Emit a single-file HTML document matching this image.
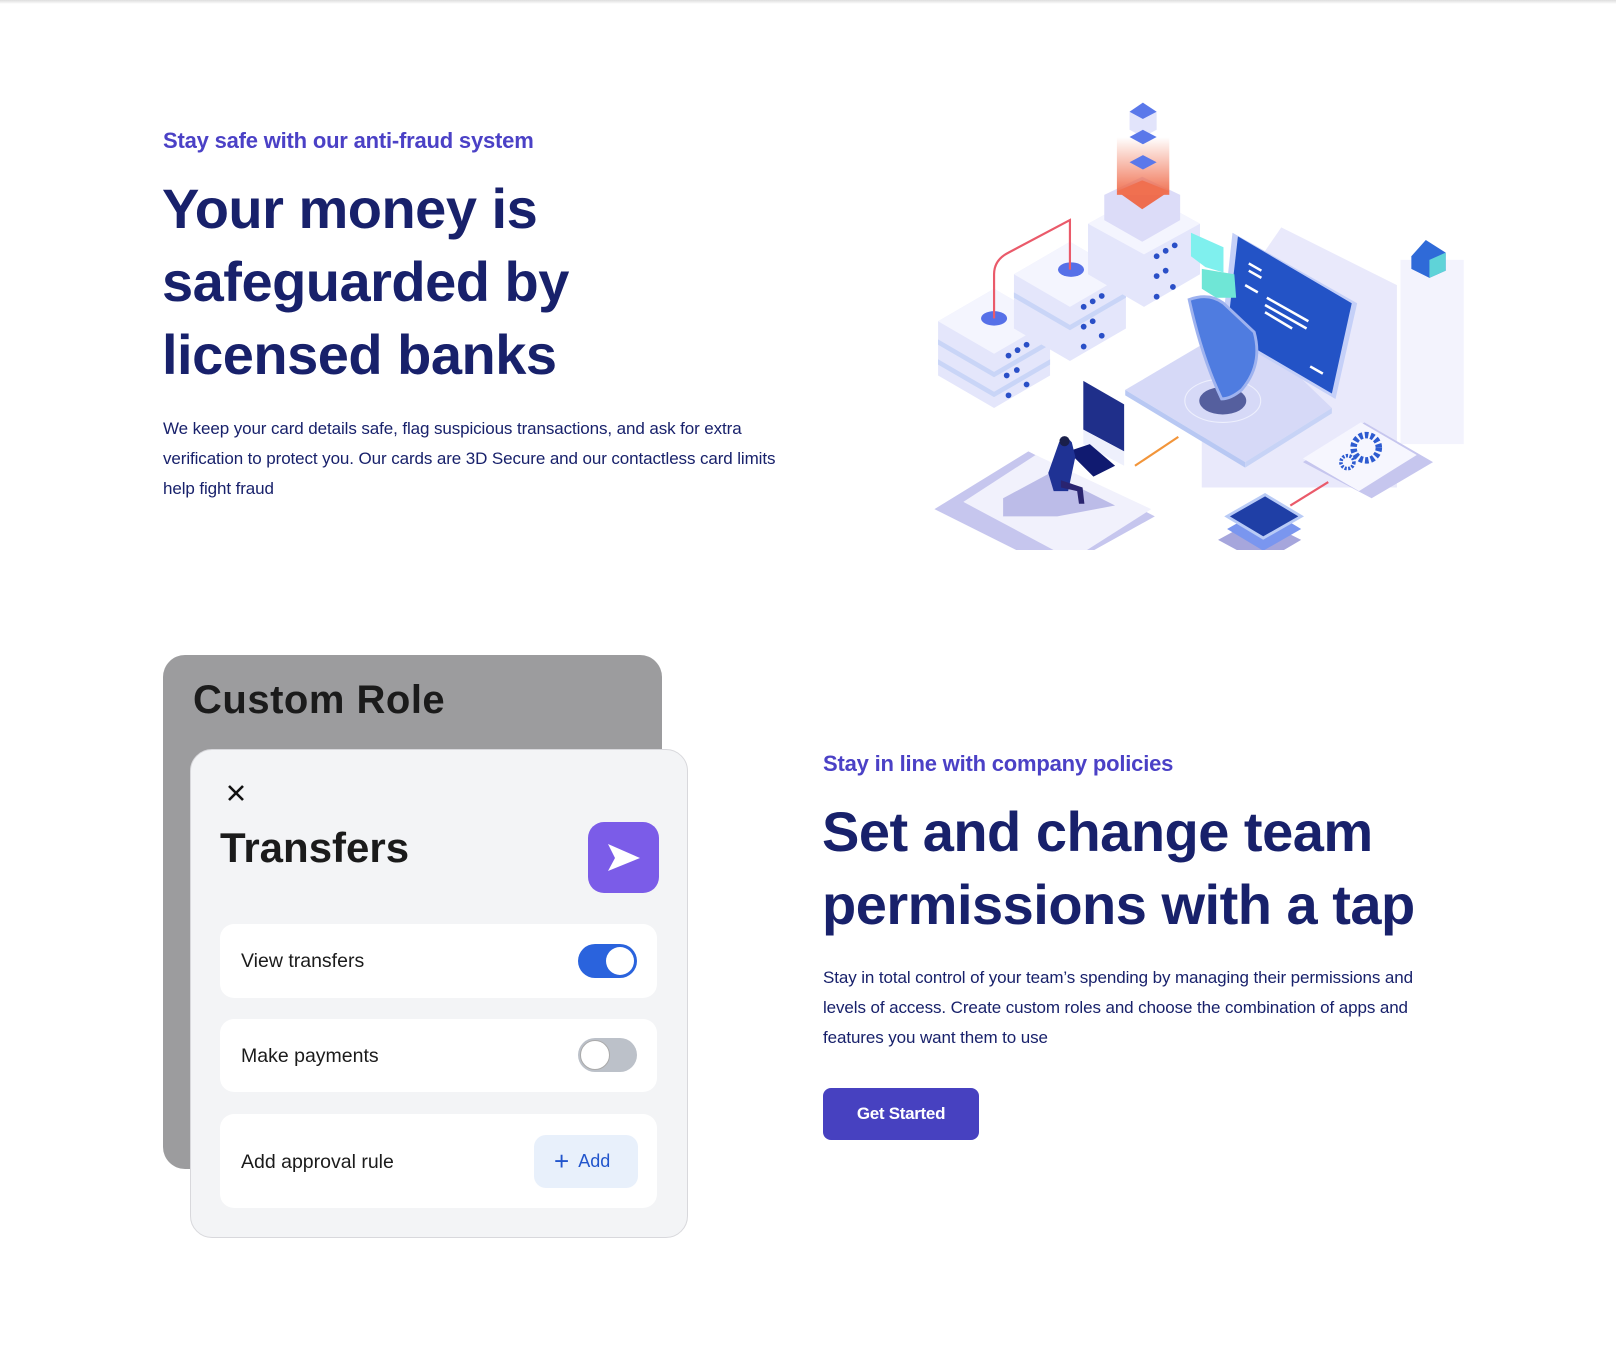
<!DOCTYPE html>
<html><head><meta charset="utf-8"><style>
*{margin:0;padding:0;box-sizing:border-box}
body{width:1616px;height:1348px;background:#fff;position:relative;overflow:hidden;font-family:"Liberation Sans",sans-serif}
.a{position:absolute;white-space:nowrap}
.eb{font-size:22px;font-weight:bold;color:#4b41c6;letter-spacing:-0.2px}
.h{font-size:56px;font-weight:bold;color:#18216b;letter-spacing:-0.5px;line-height:73px}
.p{font-size:17px;color:#18216b;line-height:30px;letter-spacing:-0.1px}
.ct{font-family:"Liberation Sans",sans-serif;color:#1b1b1b}
.row{position:absolute;left:29px;width:437px;background:#fff;border-radius:14px}
.row span{position:absolute;left:21px;font-size:19.5px;color:#1b1b1b}
</style></head><body>
<div class="a" style="left:0;top:0;width:1616px;height:4px;background:linear-gradient(#ddd,#fff)"></div>

<div class="a eb" style="left:163px;top:128px">Stay safe with our anti-fraud system</div>
<div class="a h" style="left:162px;top:172px">Your money is<br>safeguarded by<br>licensed banks</div>
<div class="a p" style="left:163px;top:414px">We keep your card details safe, flag suspicious transactions, and ask for extra<br>verification to protect you. Our cards are 3D Secure and our contactless card limits<br>help fight fraud</div>

<svg class="a" style="left:920px;top:90px" width="560" height="460" viewBox="0 0 1550 1273">
<defs><linearGradient id="g1" x1="0" y1="1" x2="0" y2="0"><stop offset="0" stop-color="#f07050"/><stop offset="1" stop-color="#f07050" stop-opacity="0"/></linearGradient></defs>
<polygon points="1000,380 1320,540 1320,1100 780,1100 780,700" fill="#e9e9fb"/>
<rect x="1330" y="470" width="175" height="510" fill="#f3f3fd"/>
<polygon points="1360,460 1400,415 1455,450 1455,500 1410,520 1360,495" fill="#2f6ad8"/>
<polygon points="1410,470 1455,450 1455,500 1410,520" fill="#5fd3d8"/>
<g>
<polygon points="50,640 205,550 360,640 360,790 205,880 50,790" fill="#e4e6fb"/>
<polygon points="50,640 205,550 360,640 205,730" fill="#f4f5fe"/>
<polygon points="50,690 205,780 360,690 360,705 205,795 50,705" fill="#c9d5f7"/>
<polygon points="50,745 205,835 360,745 360,760 205,850 50,760" fill="#c9d5f7"/>
<ellipse cx="205" cy="632" rx="36" ry="20" fill="#5670e8"/>
</g>
<g>
<polygon points="260,510 415,420 570,510 570,660 415,750 260,660" fill="#e4e6fb"/>
<polygon points="260,510 415,420 570,510 415,600" fill="#f4f5fe"/>
<polygon points="260,560 415,650 570,560 570,575 415,665 260,575" fill="#c9d5f7"/>
<ellipse cx="418" cy="497" rx="36" ry="20" fill="#5670e8"/>
</g>
<g>
<polygon points="465,370 620,285 775,370 775,510 620,600 465,510" fill="#e4e6fb"/>
<polygon points="465,370 620,285 775,370 620,455" fill="#f4f5fe"/>
<polygon points="510,290 615,240 720,290 720,360 615,420 510,360" fill="#dcdcf8"/>
<polygon points="545,280 615,250 690,280 615,330" fill="#ee6d4f"/>
<rect x="545" y="130" width="145" height="160" fill="url(#g1)"/>
<polygon points="580,60 617,35 655,60 655,110 617,130 580,110" fill="#e2e4fb"/>
<polygon points="580,60 617,35 655,60 617,80" fill="#5a78ea"/>
<polygon points="580,130 617,110 655,130 617,150" fill="#5a78ea"/>
<polygon points="580,200 617,180 655,200 617,220" fill="#5a78ea"/>
</g>
<g fill="#2a4fc7"><circle cx="245" cy="735" r="8"/><circle cx="270" cy="720" r="8"/><circle cx="295" cy="705" r="8"/><circle cx="240" cy="790" r="8"/><circle cx="268" cy="775" r="8"/><circle cx="245" cy="845" r="8"/><circle cx="295" cy="815" r="8"/>
<circle cx="453" cy="600" r="8"/><circle cx="478" cy="585" r="8"/><circle cx="503" cy="570" r="8"/><circle cx="453" cy="655" r="8"/><circle cx="478" cy="640" r="8"/><circle cx="453" cy="710" r="8"/><circle cx="503" cy="680" r="8"/>
<circle cx="655" cy="460" r="8"/><circle cx="680" cy="445" r="8"/><circle cx="705" cy="430" r="8"/><circle cx="655" cy="515" r="8"/><circle cx="680" cy="500" r="8"/><circle cx="655" cy="572" r="8"/><circle cx="700" cy="545" r="8"/></g>
<path d="M205,632 V510 Q205,470 245,450 L415,360 V497" fill="none" stroke="#ea5a6a" stroke-width="6"/>
<polygon points="40,1160 300,1000 650,1180 380,1330" fill="#c6c6ee"/>
<polygon points="120,1140 320,1010 640,1160 420,1300" fill="#f1f1fc"/>
<polygon points="230,1130 360,1060 540,1150 380,1180 230,1180" fill="#bcbce8"/>
<polygon points="452,805 565,870 565,1000 452,940" fill="#1f2f8a"/>
<polygon points="452,940 565,1000 565,1040 452,980" fill="#eef0fc"/>
<polygon points="410,1000 470,980 540,1040 480,1070" fill="#101a70"/>
<path d="M385,975 q20,-20 35,0 l10,40 -20,95 h-40 l-15,-50 z" fill="#1f3294"/>
<circle cx="400" cy="972" r="14" fill="#1a1f4a"/>
<path d="M390,1080 l60,20 5,45 h-15 l-5,-35 -45,-10z" fill="#2a2470"/>
<path d="M595,1040 L715,960" stroke="#f2953a" stroke-width="6"/>
<polygon points="568,830 890,640 1140,880 900,1030" fill="#d6d9f7"/>
<polygon points="568,830 900,1030 900,1045 568,845" fill="#b8c8f3"/>
<polygon points="900,1030 1140,880 1140,895 900,1045" fill="#c7d3f6"/>
<polygon points="865,395 1210,590 1150,855 835,670" fill="#c5d0f8"/>
<polygon points="880,405 1195,590 1140,840 850,670" fill="#2353c6"/>
<g stroke="#fff" stroke-width="7"><line x1="910" y1="480" x2="945" y2="500"/><line x1="910" y1="500" x2="945" y2="520"/><line x1="900" y1="540" x2="935" y2="560"/><line x1="960" y1="575" x2="1075" y2="640"/><line x1="955" y1="595" x2="1070" y2="660"/><line x1="955" y1="615" x2="1030" y2="660"/><line x1="1080" y1="765" x2="1115" y2="785"/></g>
<ellipse cx="838" cy="860" rx="65" ry="38" fill="#555f9e"/>
<ellipse cx="838" cy="860" rx="105" ry="60" fill="none" stroke="#eef0fd" stroke-width="3"/>
<path d="M745,580 Q800,560 840,590 L925,670 Q950,760 890,830 Q860,855 835,855 Q780,740 745,580z" fill="#4f7ce0" stroke="#9fb3ef" stroke-width="8"/>
<polygon points="750,395 840,435 840,505 790,490 750,460" fill="#7ff0ee"/>
<polygon points="780,495 870,510 875,575 820,575 780,550" fill="#6fe6d6"/>
<polygon points="1060,1030 1230,920 1420,1030 1250,1130" fill="#c6c6ee"/>
<polygon points="1060,1020 1220,920 1375,1010 1215,1110" fill="#f6f6fe"/>
<circle cx="1235" cy="990" r="35" fill="none" stroke="#2d5bd0" stroke-width="18" stroke-dasharray="10 6"/>
<circle cx="1183" cy="1030" r="18" fill="none" stroke="#2d5bd0" stroke-width="10" stroke-dasharray="6 4"/>
<path d="M1025,1150 L1130,1085" stroke="#ea5a6a" stroke-width="6"/>
<polygon points="825,1245 935,1185 1055,1245 945,1310" fill="#a6a6dc"/>
<polygon points="850,1215 955,1155 1055,1215 950,1275" fill="#7a96ef"/>
<polygon points="850,1180 955,1120 1055,1180 950,1240" fill="#1f3fa6" stroke="#b9cbf6" stroke-width="8"/>
</svg>

<div class="a" style="left:163px;top:655px;width:499px;height:514px;background:#9c9c9e;border-radius:22px"></div>
<div class="a ct" style="left:193px;top:678px;font-size:40px;font-weight:bold;letter-spacing:0.5px">Custom Role</div>
<div class="a" style="left:190px;top:749px;width:498px;height:489px;background:#f3f4f6;border:1px solid #d8d8dc;border-radius:22px">
 <svg class="a" style="left:35px;top:33px" width="20" height="20" viewBox="0 0 20 20"><path d="M3 3L17 17M17 3L3 17" stroke="#111" stroke-width="2.6"/></svg>
 <div class="a ct" style="left:29px;top:74px;font-size:42px;font-weight:bold">Transfers</div>
 <div class="a" style="left:397px;top:72px;width:71px;height:71px;background:#7b5ce8;border-radius:16px">
  <svg width="71" height="71" viewBox="0 0 71 71"><path d="M20 22 L52 36 L20 49 L27 36 Z" fill="#fff"/></svg>
 </div>
 <div class="row" style="top:174px;height:74px"><span style="top:26px">View transfers</span>
  <div class="a" style="left:358px;top:20px;width:59px;height:34px;background:#2a63dd;border-radius:17px"><div class="a" style="right:3px;top:3px;width:28px;height:28px;background:#fff;border-radius:50%"></div></div></div>
 <div class="row" style="top:269px;height:73px"><span style="top:26px">Make payments</span>
  <div class="a" style="left:358px;top:19px;width:59px;height:34px;background:#bcc1c9;border-radius:17px"><div class="a" style="left:2px;top:2px;width:30px;height:30px;background:#fff;border-radius:50%;border:1px solid #aaa"></div></div></div>
 <div class="row" style="top:364px;height:94px"><span style="top:37px">Add approval rule</span>
  <div class="a" style="left:314px;top:21px;width:104px;height:53px;background:#e8f0fb;border-radius:12px;color:#2255cc;font-size:18px;line-height:53px;padding-left:20px"><b style="font-size:26px;font-weight:normal;vertical-align:-3px">+</b>&nbsp; Add</div></div>
</div>

<div class="a eb" style="left:823px;top:751px">Stay in line with company policies</div>
<div class="a h" style="left:822px;top:795px">Set and change team<br>permissions with a tap</div>
<div class="a p" style="left:823px;top:963px">Stay in total control of your team’s spending by managing their permissions and<br>levels of access. Create custom roles and choose the combination of apps and<br>features you want them to use</div>
<div class="a" style="left:823px;top:1088px;width:156px;height:52px;background:#4741c0;border-radius:8px;color:#fff;font-size:17px;font-weight:bold;text-align:center;line-height:52px;letter-spacing:-0.3px">Get Started</div>
</body></html>
